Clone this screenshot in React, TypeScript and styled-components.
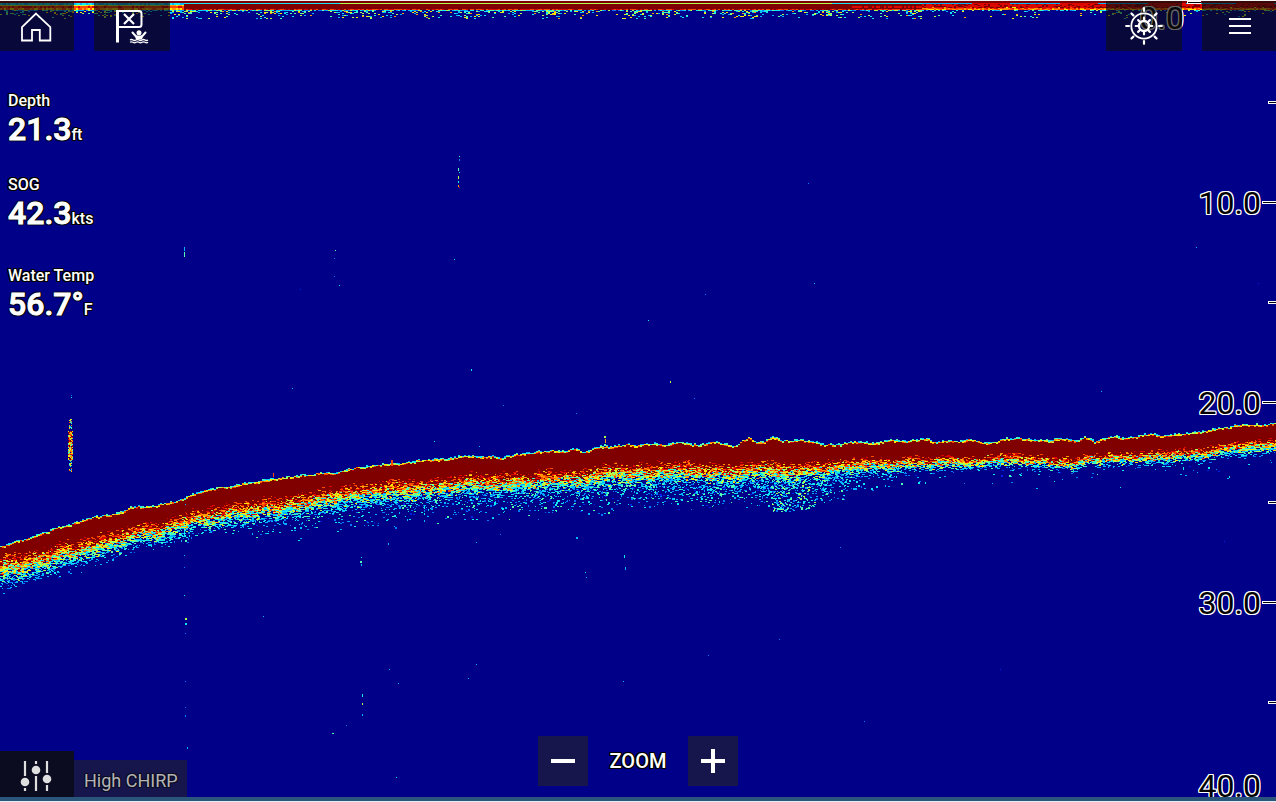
import React, { useMemo } from "react";
import styled, { createGlobalStyle } from "styled-components";

const GlobalStyle = createGlobalStyle`
  *, *::before, *::after { box-sizing: border-box; }
  body { margin: 0; background: #000089; font-family: Roboto, "Liberation Sans", sans-serif; }
`;

const outline = (color: string) => `
  text-shadow: -1px -1px 0 ${color}, 1px -1px 0 ${color}, -1px 1px 0 ${color}, 1px 1px 0 ${color},
    0 -1px 0 ${color}, 0 1px 0 ${color}, -1px 0 0 ${color}, 1px 0 0 ${color};
`;

/* ---------- echogram ---------- */

const VIEW_W = 1276;
const VIEW_H = 802;

// Weakest to strongest return.
const PALETTE = [
  "#0020e8", "#0078ff", "#00b4ff", "#10e8f4", "#50ffb0",
  "#b0ff50", "#ffe800", "#ff9a00", "#ff4a00", "#dc0800", "#800000",
];

type Point = [number, number];

const SEABED_TOP: Point[] = [
  [0, 547], [20, 540], [40, 535], [57, 528], [75, 523], [93, 518], [115, 514], [130, 508],
  [153, 507], [175, 502], [200, 493], [225, 487], [250, 483], [275, 479], [300, 477], [320, 473],
  [335, 473], [342, 470], [365, 468], [385, 466], [405, 465], [425, 460], [450, 459], [460, 457], [500, 458],
  [512, 456], [530, 454], [550, 452], [575, 450], [583, 452], [600, 448], [620, 447], [640, 447], [652, 445],
  [664, 446], [676, 443], [694, 446], [712, 444], [735, 447], [741, 442], [748, 439], [756, 443], [765, 442],
  [772, 438], [782, 442], [800, 441], [815, 444], [840, 446], [850, 443], [870, 443], [900, 442], [927, 441],
  [935, 445], [948, 442], [960, 444], [970, 441], [984, 443], [1000, 440], [1020, 439], [1050, 443],
  [1060, 440], [1075, 442], [1084, 438], [1094, 443], [1108, 438], [1125, 439], [1150, 435],
  [1160, 437], [1175, 434], [1200, 432], [1220, 429], [1240, 426], [1260, 425], [1276, 424],
];

const SEABED_CORE: Point[] = [
  [0, 563], [30, 556], [60, 548], [90, 541], [125, 530], [150, 527], [180, 519], [200, 512],
  [230, 506], [260, 502], [300, 497], [320, 492], [360, 488], [400, 484], [450, 479], [500, 477],
  [550, 474], [600, 469], [640, 467], [700, 466], [740, 463], [760, 462], [790, 467], [840, 463],
  [870, 461], [920, 459], [960, 458], [1000, 457], [1070, 459], [1100, 455], [1150, 453],
  [1200, 448], [1240, 444], [1276, 440],
];

const SEABED_FADE: Point[] = [
  [0, 19], [100, 16], [150, 14], [200, 14], [320, 16], [450, 15], [600, 15], [760, 15], [860, 12],
  [960, 9], [1100, 9], [1276, 10],
];

// Number of weak returns per column below the seabed, and how deep they reach.
const SCATTER_DENSITY: Point[] = [
  [0, 1], [60, 1], [150, 0.4], [240, 1.2], [300, 1.4], [420, 1.8], [560, 2.8], [620, 3], [720, 4],
  [760, 5.5], [780, 8], [800, 8], [820, 4.5], [860, 1.4], [900, 0.3], [1276, 0.15],
];
const SCATTER_DEPTH: Point[] = [
  [0, 18], [200, 18], [280, 32], [400, 32], [560, 34], [700, 34], [780, 34], [850, 30], [900, 20], [1276, 24],
];

const SPECKS: [number, number, number, number, number][] = [
  [459, 156, 1, 1, 4], [459, 159, 1, 2, 1], [458, 168, 1, 3, 4], [459, 172, 1, 1, 3], [458, 176, 1, 3, 5],
  [458, 181, 1, 2, 3], [458, 185, 1, 2, 7], [459, 187, 1, 1, 9],
  [184, 247, 1, 4, 2], [184, 252, 1, 5, 4], [335, 250, 1, 1, 4], [334, 258, 1, 1, 1], [334, 276, 1, 1, 1], [339, 285, 1, 1, 3],
  [300, 289, 1, 1, 0], [454, 259, 1, 1, 3], [808, 183, 1, 1, 1], [814, 283, 1, 1, 2], [705, 294, 1, 1, 1],
  [648, 320, 1, 1, 3], [471, 369, 1, 2, 3], [292, 388, 1, 1, 2], [670, 381, 1, 2, 5], [503, 405, 1, 1, 1],
  [694, 398, 1, 1, 1], [1196, 247, 1, 1, 2], [1258, 283, 1, 1, 0], [576, 413, 1, 1, 1], [1101, 391, 1, 1, 2],
  [71, 397, 1, 1, 3], [71, 395, 1, 1, 1], [434, 441, 1, 1, 3], [479, 446, 1, 1, 2], [185, 504, 1, 1, 2],
  [604, 436, 2, 2, 5], [605, 439, 1, 4, 7], [604, 444, 2, 2, 4], [391, 460, 2, 6, 8], [273, 473, 1, 4, 8],
  [184, 524, 1, 12, 3], [185, 540, 2, 2, 4], [184, 555, 1, 1, 2], [184, 567, 1, 1, 1], [184, 595, 1, 1, 3],
  [185, 618, 2, 2, 5], [185, 623, 2, 2, 3], [185, 633, 1, 1, 1], [185, 681, 1, 1, 1], [185, 707, 1, 1, 1],
  [185, 715, 1, 2, 1], [187, 747, 1, 2, 2], [263, 616, 1, 1, 2], [361, 557, 1, 1, 3], [360, 561, 2, 2, 4],
  [361, 564, 1, 2, 2], [388, 543, 1, 2, 2], [394, 526, 1, 1, 2], [424, 506, 1, 3, 3], [424, 513, 1, 2, 3],
  [424, 520, 1, 2, 2], [476, 542, 1, 1, 2], [500, 534, 1, 1, 1],
  [576, 537, 2, 2, 2], [585, 572, 1, 1, 3], [586, 577, 1, 1, 2], [624, 555, 1, 3, 3], [625, 567, 1, 3, 2],
  [840, 547, 1, 1, 1], [362, 694, 1, 3, 3], [362, 703, 1, 2, 5], [362, 714, 1, 2, 2], [332, 733, 2, 1, 4],
  [346, 725, 1, 1, 1], [389, 669, 1, 1, 2], [398, 683, 1, 1, 2], [476, 664, 1, 1, 2], [468, 678, 1, 1, 2],
  [623, 681, 1, 1, 2], [396, 777, 1, 1, 3], [708, 655, 1, 1, 1], [779, 639, 1, 1, 1], [864, 721, 1, 1, 1],
  [1000, 669, 1, 1, 0], [1224, 541, 1, 1, 0], [1183, 467, 1, 3, 3], [1197, 472, 1, 1, 2], [1229, 476, 1, 2, 3],
  [1227, 478, 2, 1, 2], [1180, 474, 2, 1, 2], [1120, 487, 1, 1, 3], [1036, 488, 2, 1, 2],
];

function createRandom(seed: number) {
  let s = seed;
  return () => {
    s = (s + 0x6d2b79f5) | 0;
    let t = Math.imul(s ^ (s >>> 15), 1 | s);
    t = (t + Math.imul(t ^ (t >>> 7), 61 | t)) ^ t;
    return ((t ^ (t >>> 14)) >>> 0) / 4294967296;
  };
}

function sample(points: Point[], x: number) {
  for (let i = 1; i < points.length; i++) {
    const [x1, y1] = points[i];
    if (x <= x1) {
      const [x0, y0] = points[i - 1];
      return y0 + ((y1 - y0) * (x - x0)) / (x1 - x0);
    }
  }
  return points[points.length - 1][1];
}

function buildReturns() {
  const random = createRandom(41);
  const paths: string[][] = PALETTE.map(() => []);
  const plot = (x: number, y: number, w: number, h: number, level: number) => {
    const i = Math.max(0, Math.min(PALETTE.length - 1, Math.floor(level)));
    paths[i].push(`M${x} ${y}h${w}v${h}h${-w}z`);
  };

  // Transducer ring-down along the surface.
  plot(0, 1, VIEW_W, 8, 10);
  for (let x = 0; x < VIEW_W; x += 2) {
    const left = x < 184;
    const right = x > 920;
    if (left) {
      plot(x, 3, 2, 2, 2 + random() * 2);
      plot(x, 5, 2, 1, 5 + random() * 3);
      plot(x, 6, 2, 2, 8 + random() * 1.8);
      plot(x, 8, 2, 2, 6 + random() * 3);
    } else {
      plot(x, 3, 2, 1, right ? (Math.sin(x / 14) < 0.2 ? 2 : 9) : x < 340 || x > 830 ? 3 : 5);
      if (right) {
        for (let y = 4; y < 8; y++) plot(x, y, 2, 1, 9 + random() * (y < 6 ? 1.4 : 1.7));
        if (random() < 0.2) plot(x, 7, 2, 2, 6 + random() * 3);
        plot(x, 8, 2, 1, 7 + random() * 2.8);
      } else if (x > 850) {
        plot(x, 6, 2, 2, 9.2 + random());
      }
      plot(x, 9, 2, 1, right ? 6 + random() * 3 : 8 + random() * 2.6);
    }
    if (random() < (right ? 0.4 : 0.8)) plot(x, 10, 2, 1, 1 + random() * 5);
    const clump = 0.5 + 0.5 * Math.sin(x / 9) * Math.sin(x / 23);
    for (let y = 11; y < 19; y++) {
      const chance = (right ? 0.16 : 0.5) * clump * (1 - (y - 11) / 9);
      if (random() < chance) plot(x, y, 2, 1, 2 + random() * 5.5);
    }
  }

  // Solid seabed core, column by column so its edge stays ragged.
  let drift = 0;
  for (let x = 0; x < VIEW_W; x += 2) {
    drift = drift * 0.8 + (random() - 0.5) * 1.4;
    const top = Math.round(sample(SEABED_TOP, x) + drift);
    const core = Math.round(sample(SEABED_CORE, x)) + 2;
    plot(x, top, 2, core - top, 10);
    plot(x, top - 1, 2, 1, 3 + random() * 5.5);
    if (random() < 0.65) plot(x, top, 2, 1, 5 + random() * 4.5);
    if (random() < 0.4) plot(x, top - 2, 2, 1, 2 + random() * 3);
  }

  // Softer returns trailing off beneath the core, in short runs of uneven strength.
  const swell: number[] = [];
  let drifted = 0;
  for (let x = 0; x < VIEW_W + 4; x++) {
    if (x % 3 === 0) drifted = drifted * 0.7 + (random() - 0.5) * 0.24;
    swell.push(drifted);
  }
  for (let y = 430; y < 600; y++) {
    let x = 0;
    while (x < VIEW_W) {
      const r = random();
      const w = r < 0.3 ? 1 : r < 0.75 ? 2 : 3;
      const core = sample(SEABED_CORE, x);
      const t = (y - core) / sample(SEABED_FADE, x) + swell[x];
      if (t > -0.35 && t < 1.8) {
        const level = (0.97 - t * 0.82 + (random() + random() - 1) * 0.55) * 10.5;
        if (level > (t > 1 ? 1.5 : 2)) plot(x, y, w, 1, level);
      }
      x += w;
    }
  }

  for (let x = 0; x < VIEW_W; x++) {
    const base = sample(SEABED_CORE, x) + sample(SEABED_FADE, x) * 0.8;
    const depth = sample(SCATTER_DEPTH, x);
    const clump = 0.6 + 0.8 * Math.abs(Math.sin(x / 7) * Math.cos(x / 19));
    let n = Math.floor(sample(SCATTER_DENSITY, x) * 1.1 * clump + random());
    while (n-- > 0) {
      const dense = x > 770 && x < 815;
      const f = dense ? random() : random() * (0.35 + 0.65 * random());
      plot(
        x,
        Math.round(base + f * depth),
        random() < 0.65 ? 2 : 1,
        random() < 0.15 ? 2 : 1,
        0.7 + random() * (dense ? 4.8 : 3.8),
      );
    }
  }

  // A single fish arch on the left.
  for (let y = 419; y < 472; y++) {
    const full = y > 430 && y < 460;
    for (let x = full ? 68 : 69; x < (full ? 73 : 72); x++) {
      if (random() < (full ? 0.9 : 0.6)) plot(x, y, 1, 1, full ? 4 + random() * 7 : 2 + random() * 7);
    }
  }

  SPECKS.forEach(([x, y, w, h, level]) => plot(x, y, w, h, level));
  return paths.map((p) => p.join(""));
}

const EchogramSvg = styled.svg`
  position: absolute;
  inset: 0;
  width: 100%;
  height: 100%;
  display: block;
`;

function Echogram() {
  const paths = useMemo(buildReturns, []);
  // The strongest level goes down first so the speckle stays visible on its edge.
  const order = [10, 0, 1, 2, 3, 4, 5, 6, 7, 8, 9];
  return (
    <EchogramSvg
      viewBox={`0 0 ${VIEW_W} ${VIEW_H}`}
      preserveAspectRatio="none"
      shapeRendering="crispEdges"
      role="img"
      aria-label="Sonar echogram"
    >
      {order.map((i) => (
        <path key={i} d={paths[i]} fill={PALETTE[i]} />
      ))}
    </EchogramSvg>
  );
}

/* ---------- depth scale ---------- */

const Scale = styled.div`
  position: absolute;
  inset: 0 0 0 auto;
  padding-top: 1px;
  overflow: hidden;
  display: flex;
  flex-direction: column;
`;

const ScaleMark = styled.div<{ $edge?: "top" | "bottom" }>`
  flex: ${(p) => (p.$edge === "top" ? "1 0 1px" : p.$edge === "bottom" ? "1 0 0" : "2 0 0")};
  min-height: 0;
  display: flex;
  justify-content: flex-end;
  align-items: ${(p) => (p.$edge === "top" ? "flex-start" : p.$edge === "bottom" ? "flex-end" : "center")};
  gap: ${(p) => (p.$edge === "top" ? 3 : 1)}px;
  padding-right: ${(p) => (p.$edge === "top" ? "75px" : p.$edge === "bottom" ? "15px" : "0")};
`;

const ScaleLabel = styled.span`
  padding-top: 1px;
  font-size: 32px;
  line-height: 32px;
  color: #000;
  ${outline("#fff")}
`;

const Tick = styled.span<{ $minor?: boolean }>`
  width: ${(p) => (p.$minor ? 8 : 14)}px;
  height: 3px;
  border: 1px solid #fff;
  border-right-width: 0;
  background: #000;
`;

/* ---------- page parts ---------- */

const Screen = styled.main`
  position: relative;
  min-height: 100vh;
  display: flex;
  flex-direction: column;
  overflow: hidden;
  background: #000089;
  border-top: 1px solid #f4f4f4;
  border-bottom: 1px solid #e4ecf2;
`;

const Underlay = styled.div`
  position: absolute;
  inset: -1px 0;
`;

const Header = styled.header`
  position: relative;
  display: flex;
  justify-content: space-between;
`;

const ButtonGroup = styled.div`
  display: flex;
  gap: 20px;
`;

const BarButton = styled.button<{ $width: number }>`
  width: ${(p) => p.$width}px;
  height: 50px;
  padding: 0;
  border: 0;
  background: rgba(12, 12, 12, 0.63);
  color: #fff;
  cursor: pointer;

  svg { display: block; }
`;

const Readouts = styled.dl`
  position: relative;
  flex: 1;
  margin: 0;
  padding: 40px 8px 0;
`;

const Readout = styled.div<{ $gap: number }>`
  margin-bottom: ${(p) => p.$gap}px;
  font-weight: 500;
  color: #fff;
  ${outline("#000")}
`;

const ReadoutLabel = styled.dt`
  font-size: 16px;
  line-height: 20px;
`;

const ReadoutValue = styled.dd`
  display: flex;
  align-items: baseline;
  height: 36px;
  margin: 0;
  line-height: 36px;
`;

const Figure = styled.span`
  font-size: 32px;
  line-height: 36px;
  -webkit-text-stroke: 1px #fff;
  text-shadow: 0 0 2px #000, 0 0 2px #000, 0 0 2px #000, 1px 1px 1px #000, -1px -1px 1px #000,
    1px -1px 1px #000, -1px 1px 1px #000;
`;

const Unit = styled.span`
  font-size: 16px;
  line-height: 20px;
`;

const Footer = styled.footer`
  position: relative;
  display: grid;
  grid-template-columns: 1fr auto 1fr;
  align-items: end;
  border-bottom: 4px solid #2b567c;
`;

const ChannelBar = styled.div`
  display: flex;
  align-items: flex-end;
`;

const SettingsButton = styled.button`
  width: 74px;
  height: 46px;
  padding: 0;
  border: 0;
  background: #0b0c20;
  color: #dedede;
  cursor: pointer;

  svg { display: block; }
`;

const ChannelName = styled.span`
  height: 37px;
  padding: 2px 9px 0 10px;
  background: #16164c;
  color: #b4b4b4;
  font-size: 18px;
  line-height: 37px;
  ${outline("#0c0c24")}
`;

const ZoomControl = styled.div`
  display: flex;
  align-items: center;
  gap: 22px;
  padding-bottom: 11px;
`;

const ZoomButton = styled.button`
  width: 50px;
  height: 50px;
  padding: 0;
  border: 0;
  background: #16164c;
  color: #fff;
  cursor: pointer;

  svg { display: block; margin: auto; }
`;

const ZoomLabel = styled.span`
  font-size: 20px;
  line-height: 24px;
  font-weight: 500;
  color: #fff;
  ${outline("#000")}
`;

/* ---------- icons ---------- */

const HomeIcon = () => (
  <svg width="74" height="50" fill="none" stroke="currentColor" strokeWidth="1.8" aria-hidden="true">
    <path d="M36 12.6 50.3 26.2V39.5H39.8V29H32v10.5H22V26.2Z" />
  </svg>
);

const WaypointIcon = () => (
  <svg width="76" height="50" fill="none" stroke="currentColor" aria-hidden="true">
    <path d="M23.5 9v32.5" strokeWidth="3" />
    <path d="M24 10h21q2.500 0 2.500 2.500v11q0 2.500-2.500 2.500H25" strokeWidth="2" />
    <path d="m30 13 10 10M40 13 30 23" strokeWidth="2.200" />
    <circle cx="45" cy="31.800" r="2.500" fill="currentColor" stroke="none" />
    <path d="m38.500 31.500 4 4.500M51.500 31.500l-4 4.500" strokeWidth="2" strokeLinecap="round" />
    <path d="M41 34.500h8l-1 4h-6Z" fill="currentColor" stroke="none" />
    <path d="M36 39q1.500-1 3 0t3 0 3 0 3 0 3 0 3 0M36 41.300q1.500-1 3 0t3 0 3 0 3 0 3 0 3 0" strokeWidth="1.300" />
  </svg>
);

const HelmIcon = () => {
  const angles = [0, 45, 90, 135, 180, 225, 270, 315];
  return (
    <svg width="76" height="50" fill="none" stroke="currentColor" aria-hidden="true">
      <g transform="translate(38 25)">
        <circle r="12.700" strokeWidth="1.800" />
        <circle r="5" strokeWidth="2.400" />
        {angles.map((a) => (
          <g key={a} transform={`rotate(${a})`} strokeWidth="2.200" strokeLinecap="round">
            <path d="M0-6v-2.300" />
            <path d="M0-15v-2.800" />
          </g>
        ))}
      </g>
    </svg>
  );
};

const MenuIcon = () => (
  <svg width="74" height="50" stroke="currentColor" strokeWidth="2" aria-hidden="true">
    <path d="M27 18h22M27 25h22M27 32h22" />
  </svg>
);

const SlidersIcon = () => (
  <svg width="74" height="46" stroke="currentColor" strokeWidth="2.200" fill="currentColor" aria-hidden="true">
    <path d="M25 10v15M25 37v3M36 10v3M36 25v15M47 10v12M47 34v6" />
    <g stroke="none">
      <circle cx="25" cy="31" r="4.300" />
      <circle cx="36" cy="19" r="4.300" />
      <circle cx="47" cy="28" r="4.300" />
    </g>
  </svg>
);

const StepIcon = ({ plus }: { plus?: boolean }) => (
  <svg width="24" height="24" stroke="currentColor" strokeWidth="4" aria-hidden="true">
    <path d={plus ? "M0 12h24M12 0v24" : "M0 12h24"} />
  </svg>
);

/* ---------- app ---------- */

const MARKS = ["", "10.0", "", "20.0", "", "30.0", ""];

const READOUTS = [
  { label: "Depth", value: "21.3", unit: "ft", gap: 28 },
  { label: "SOG", value: "42.3", unit: "kts", gap: 35 },
  { label: "Water Temp", value: "56.7°", unit: "F", gap: 0 },
];

export default function App() {
  return (
    <Screen>
      <GlobalStyle />
      <Underlay>
        <Echogram />
        <Scale>
          <ScaleMark $edge="top">
            <ScaleLabel>0.0</ScaleLabel>
            <Tick />
          </ScaleMark>
          {MARKS.map((label, i) => (
            <ScaleMark key={i}>
              {label && <ScaleLabel>{label}</ScaleLabel>}
              <Tick $minor={!label} />
            </ScaleMark>
          ))}
          <ScaleMark $edge="bottom">
            <ScaleLabel>40.0</ScaleLabel>
          </ScaleMark>
        </Scale>
      </Underlay>

      <Header>
        <ButtonGroup>
          <BarButton $width={74} aria-label="Home"><HomeIcon /></BarButton>
          <BarButton $width={76} aria-label="Waypoint and man overboard"><WaypointIcon /></BarButton>
        </ButtonGroup>
        <ButtonGroup>
          <BarButton $width={76} aria-label="Pilot"><HelmIcon /></BarButton>
          <BarButton $width={74} aria-label="Menu"><MenuIcon /></BarButton>
        </ButtonGroup>
      </Header>

      <Readouts>
        {READOUTS.map((r) => (
          <Readout key={r.label} $gap={r.gap}>
            <ReadoutLabel>{r.label}</ReadoutLabel>
            <ReadoutValue>
              <Figure>{r.value}</Figure>
              <Unit>{r.unit}</Unit>
            </ReadoutValue>
          </Readout>
        ))}
      </Readouts>

      <Footer>
        <ChannelBar>
          <SettingsButton aria-label="Sonar settings"><SlidersIcon /></SettingsButton>
          <ChannelName>High CHIRP</ChannelName>
        </ChannelBar>
        <ZoomControl>
          <ZoomButton aria-label="Zoom out"><StepIcon /></ZoomButton>
          <ZoomLabel>ZOOM</ZoomLabel>
          <ZoomButton aria-label="Zoom in"><StepIcon plus /></ZoomButton>
        </ZoomControl>
      </Footer>
    </Screen>
  );
}
